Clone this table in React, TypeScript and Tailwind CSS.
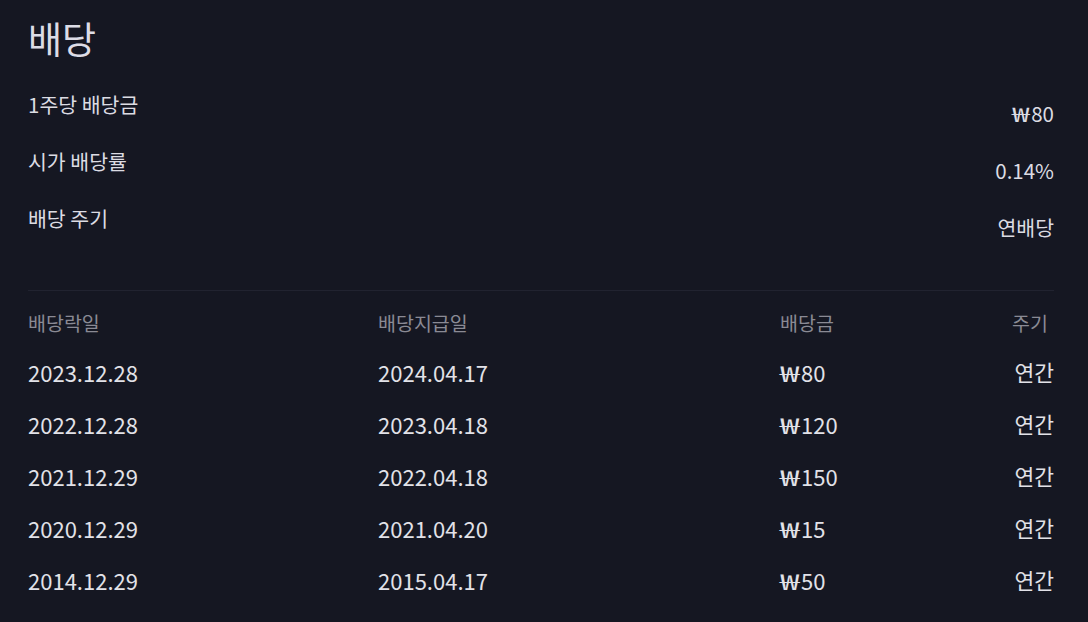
const summary = [
  { label: "1주당 배당금", value: "₩80" },
  { label: "시가 배당률", value: "0.14%" },
  { label: "배당 주기", value: "연배당" },
]

const rows = [
  { ex: "2023.12.28", pay: "2024.04.17", amount: "80", cycle: "연간" },
  { ex: "2022.12.28", pay: "2023.04.18", amount: "120", cycle: "연간" },
  { ex: "2021.12.29", pay: "2022.04.18", amount: "150", cycle: "연간" },
  { ex: "2020.12.29", pay: "2021.04.20", amount: "15", cycle: "연간" },
  { ex: "2014.12.29", pay: "2015.04.17", amount: "50", cycle: "연간" },
]

function Won({ size }: { size: "sm" | "lg" }) {
  return (
    <span
      className={
        size === "lg"
          ? "inline-block w-[21px] origin-left scale-x-[1.6]"
          : "inline-block w-[19px] origin-left scale-x-[1.55]"
      }
    >
      ₩
    </span>
  )
}

export default function App() {
  return (
    <div
      className="min-h-[622px] w-full bg-[#151722] pl-7 pr-[34px] pt-4 text-[#dcdce3]"
      style={{ fontFamily: '"Noto Sans CJK KR", "Noto Sans", sans-serif' }}
    >
      <h1 className="text-[37px] leading-[44px] text-[#dcdce6]">배당</h1>

      <div className="mt-[30px]">
        {summary.map((s) => (
          <div key={s.label} className="flex h-[57px] items-start justify-between">
            <span className="text-[20.5px] leading-[28px]">{s.label}</span>
            <span className="mt-[9px] text-[20.5px] leading-[28px]">
              {s.value.startsWith("₩") ? (
                <>
                  <Won size="sm" />
                  {s.value.slice(1)}
                </>
              ) : (
                s.value
              )}
            </span>
          </div>
        ))}
      </div>

      <div className="mt-[29px] border-t border-[#212330]" />

      <div className="grid grid-cols-[350px_402px_1fr_auto]">
        <div className="contents text-[19.5px] text-[#8a8a94]">
          <div className="flex h-[55px] items-center pt-[9px]">배당락일</div>
          <div className="flex h-[55px] items-center pt-[9px]">배당지급일</div>
          <div className="flex h-[55px] items-center pt-[9px]">배당금</div>
          <div className="flex h-[55px] items-center justify-end pr-1.5 pt-[9px]">주기</div>
        </div>
        {rows.map((r) => (
          <div key={r.ex} className="contents text-[22px] text-[#e2e2e8]">
            <div className="flex h-[52px] items-center">{r.ex}</div>
            <div className="flex h-[52px] items-center">{r.pay}</div>
            <div className="flex h-[52px] items-center">
              <Won size="lg" />
              {r.amount}
            </div>
            <div className="flex h-[52px] items-center justify-end text-[21.5px]">{r.cycle}</div>
          </div>
        ))}
      </div>
    </div>
  )
}
